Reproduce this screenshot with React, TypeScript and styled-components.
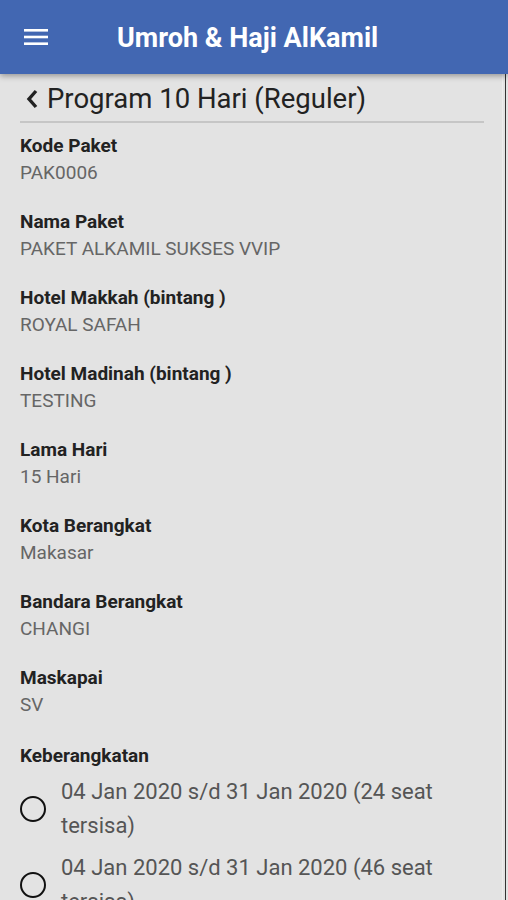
import styled, { createGlobalStyle } from "styled-components";

const GlobalStyle = createGlobalStyle`
  html, body {
    margin: 0;
    padding: 0;
    background: #e3e3e3;
    font-family: Roboto, "Liberation Sans", Arial, sans-serif;
  }
`;

const Page = styled.div`
  width: 508px;
  height: 900px;
  overflow: hidden;
  background: #e3e3e3;
  position: relative;
`;

const AppBar = styled.header`
  height: 74px;
  background: #4267b2;
  display: flex;
  align-items: center;
  padding: 0 0 0 22px;
  box-shadow: 0 2px 6px rgba(0, 0, 0, 0.35);
  position: relative;
  z-index: 2;
`;

const MenuButton = styled.button`
  width: 28px;
  height: 28px;
  border: 0;
  background: transparent;
  padding: 0;
  display: grid;
  place-items: center;
  color: #fff;
`;

const AppTitle = styled.h1`
  flex: 1;
  margin: 2px 0 0 67px;
  font-size: 27px;
  font-weight: 700;
  color: #fff;
`;

const Content = styled.main`
  padding: 9px 24px 0 20px;
`;

const PageTitle = styled.div`
  display: flex;
  align-items: center;
  gap: 8px;
  padding: 0 0 6px 5px;
  border-bottom: 2px solid #c6c6c6;
  font-size: 27.5px;
  color: #222;
  line-height: 32px;
`;

const Field = styled.div`
  display: grid;
  gap: 4px;
  padding-top: 11px;
  margin-bottom: 26px;

  & + & {
    padding-top: 0;
  }
`;

const Label = styled.div`
  font-size: 19px;
  font-weight: 700;
  color: #222;
  line-height: 23px;
`;

const Value = styled.div`
  font-size: 19px;
  color: #666;
  line-height: 23px;
`;

const Section = styled.div`
  padding-top: 2px;
`;

const RadioList = styled.div`
  display: grid;
  gap: 8px;
  margin-top: 8px;
`;

const RadioRow = styled.label`
  display: flex;
  align-items: center;
  gap: 15px;
`;

const Circle = styled.span`
  flex: none;
  width: 22px;
  height: 22px;
  border: 2.5px solid #111;
  border-radius: 50%;
`;

const RadioText = styled.span`
  font-size: 22px;
  line-height: 34px;
  color: #555;
  padding-right: 30px;
`;

const ScrollEdge = styled.div`
  position: absolute;
  top: 74px;
  right: 2px;
  bottom: 0;
  width: 1px;
  background: #333;
  box-shadow: -3px 0 0 #ececec;
`;

const fields = [
  ["Kode Paket", "PAK0006"],
  ["Nama Paket", "PAKET ALKAMIL SUKSES VVIP"],
  ["Hotel Makkah (bintang )", "ROYAL SAFAH"],
  ["Hotel Madinah (bintang )", "TESTING"],
  ["Lama Hari", "15 Hari"],
  ["Kota Berangkat", "Makasar"],
  ["Bandara Berangkat", "CHANGI"],
  ["Maskapai", "SV"],
];

const departures = [
  "04 Jan 2020 s/d 31 Jan 2020 (24 seat tersisa)",
  "04 Jan 2020 s/d 31 Jan 2020 (46 seat tersisa)",
];

export default function App() {
  return (
    <Page>
      <GlobalStyle />
      <AppBar>
        <MenuButton aria-label="menu">
          <svg width="26" height="20" viewBox="0 0 26 20">
            <rect x="1" y="2" width="24" height="2.6" fill="#fff" />
            <rect x="1" y="8.7" width="24" height="2.6" fill="#fff" />
            <rect x="1" y="15.4" width="24" height="2.6" fill="#fff" />
          </svg>
        </MenuButton>
        <AppTitle>Umroh &amp; Haji AlKamil</AppTitle>
      </AppBar>
      <Content>
        <PageTitle>
          <svg width="14" height="24" viewBox="0 0 14 24">
            <path d="M11 4 L4 12 L11 20" stroke="#222" strokeWidth="3.4" fill="none" />
          </svg>
          Program 10 Hari (Reguler)
        </PageTitle>
        {fields.map(([label, value]) => (
          <Field key={label}>
            <Label>{label}</Label>
            <Value>{value}</Value>
          </Field>
        ))}
        <Section>
          <Label>Keberangkatan</Label>
          <RadioList>
            {departures.map((d, i) => (
              <RadioRow key={i}>
                <Circle />
                <RadioText>{d}</RadioText>
              </RadioRow>
            ))}
          </RadioList>
        </Section>
      </Content>
      <ScrollEdge />
    </Page>
  );
}
